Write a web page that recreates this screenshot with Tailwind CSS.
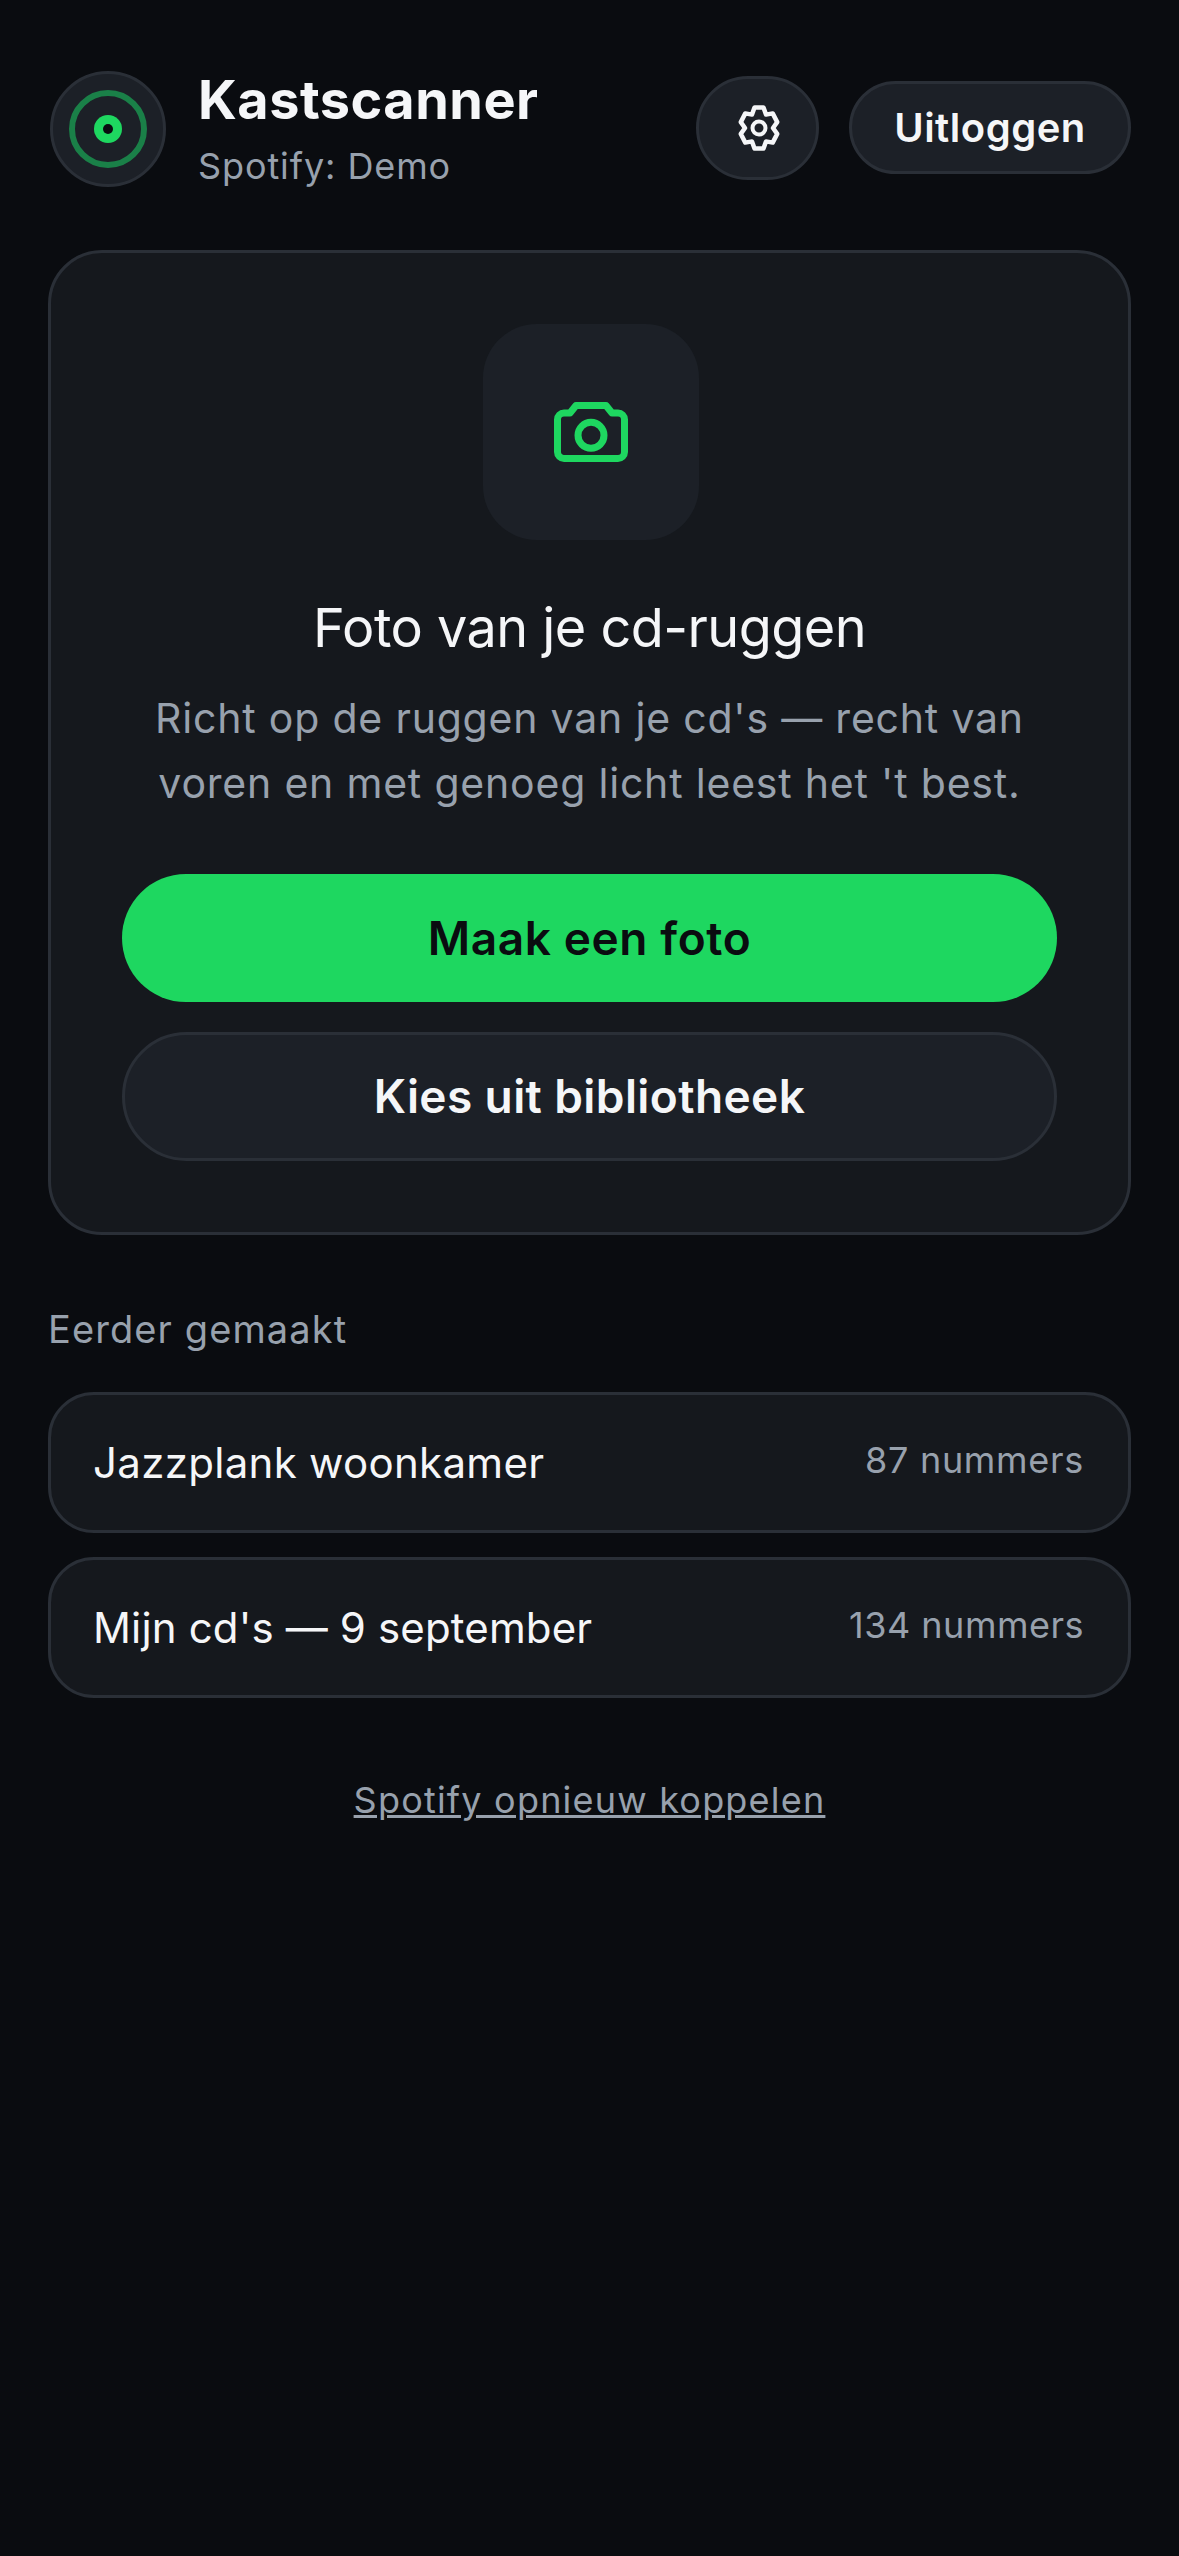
<!DOCTYPE html>
<html lang="nl">
<head>
    <meta charset="UTF-8">
    <meta name="viewport" content="width=device-width, initial-scale=1.0">
    <title>Kastscanner</title>
    <script src="https://cdn.jsdelivr.net/npm/@tailwindcss/browser@4"></script>
</head>
<body class="bg-[#0a0c10] font-[Inter,sans-serif] text-[#f5f6f8]">
    <main class="h-[2556px] px-[48px] pt-[71px]">
        <!-- Kop -->
        <header class="flex h-[116px] items-center">
            <div class="ml-[2px] flex h-[116px] w-[116px] items-center justify-center rounded-full border-[3px] border-[#2a2f37] bg-[#1c2027]">
                <div class="flex h-[78px] w-[78px] items-center justify-center rounded-full border-[6px] border-[#1a8048]">
                    <div class="flex h-[28px] w-[28px] items-center justify-center rounded-full bg-[#1ed760]">
                        <div class="h-[10px] w-[10px] rounded-full bg-[#0a0c10]"></div>
                    </div>
                </div>
            </div>
            <div class="ml-[32px] flex flex-col">
                <h1 class="text-[54px] leading-[66px] font-bold tracking-[0.5px]">Kastscanner</h1>
                <p class="mt-[8px] text-[36px] leading-[50px] tracking-[0.9px] text-[#98a1ad]">Spotify: Demo</p>
            </div>
            <div class="mb-[3px] ml-auto flex items-center">
                <button class="flex h-[104px] w-[123px] items-center justify-center rounded-full border-[3px] border-[#2a2f37] bg-[#1c2027]">
                    <svg class="ml-[3px] h-[60px] w-[60px]" viewBox="-30 -30 60 60" fill="none" stroke="#f5f6f8" stroke-width="4.5" stroke-linejoin="round">
                        <path d="M-4.500 -20.500 L4.500 -20.500 L7 -13.400 L13.700 -14.600 L18.200 -5.900 L14 0 L18.200 5.900 L13.700 14.600 L7 13.400 L4.500 20.500 L-4.500 20.500 L-7 13.400 L-13.700 14.600 L-18.200 5.900 L-14 0 L-18.200 -5.900 L-13.700 -14.600 L-7 -13.400 Z"/>
                        <circle cx="0" cy="0" r="6.500" stroke-width="4"/>
                    </svg>
                </button>
                <button class="ml-[30px] flex h-[93px] w-[282px] items-center justify-center rounded-full border-[3px] border-[#2a2f37] bg-[#1c2027] text-[40px] font-semibold tracking-[0.5px]">Uitloggen</button>
            </div>
        </header>

        <!-- Foto maken -->
        <section class="mt-[63px] flex h-[985px] flex-col items-center rounded-[54px] border-[3px] border-[#2a2f37] bg-[#15181d] px-[71px] pt-[71px]">
            <div class="ml-[2px] flex h-[216px] w-[216px] items-center justify-center rounded-[54px] bg-[#1c2027]">
                <svg class="h-[60px] w-[74px]" viewBox="0 0 74 60" fill="none" stroke="#1ed760" stroke-width="7" stroke-linejoin="round">
                    <path d="M16 11 L22 3.5 H52 L58 11 H64 a6.5 6.5 0 0 1 6.5 6.5 V50 a6.5 6.5 0 0 1 -6.5 6.5 H10 a6.5 6.5 0 0 1 -6.5 -6.5 V17.500 a6.5 6.5 0 0 1 6.5 -6.5 Z"/>
                    <circle cx="37" cy="33.3" r="13"/>
                </svg>
            </div>
            <h2 class="mt-[54px] text-[54px] leading-[68px] tracking-[-0.55px]">Foto van je cd-ruggen</h2>
            <p class="mt-[24px] text-center text-[41px] leading-[65px] tracking-[0.8px] text-[#98a1ad]">Richt op de ruggen van je cd's — recht van<br>voren en met genoeg licht leest het 't best.</p>
            <button class="mt-[58px] h-[128px] w-full rounded-full bg-[#1ed760] text-[46px] font-semibold tracking-[0.6px] text-[#0a0c10]">Maak een foto</button>
            <button class="mt-[30px] h-[129px] w-full rounded-full border-[3px] border-[#2a2f37] bg-[#1c2027] text-[46px] font-semibold tracking-[0.4px]">Kies uit bibliotheek</button>
        </section>

        <!-- Eerder gemaakt -->
        <h3 class="mt-[70px] text-[38px] leading-[48px] tracking-[1.1px] text-[#98a1ad]">Eerder gemaakt</h3>
        <ul class="mt-[39px] flex flex-col gap-[24px]">
            <li class="flex h-[141px] items-center justify-between rounded-[46px] border-[3px] border-[#2a2f37] bg-[#15181d] pr-[44px] pl-[42px]">
                <span class="text-[42px] tracking-[0.3px]">Jazzplank woonkamer</span>
                <span class="mb-[5px] text-[36px] tracking-[0.7px] text-[#98a1ad]">87 nummers</span>
            </li>
            <li class="flex h-[141px] items-center justify-between rounded-[46px] border-[3px] border-[#2a2f37] bg-[#15181d] pr-[44px] pl-[42px]">
                <span class="text-[42px] tracking-[0.15px]">Mijn cd's — 9 september</span>
                <span class="mb-[5px] text-[36px] tracking-[0.5px] text-[#98a1ad]">134 nummers</span>
            </li>
        </ul>
        <div class="mt-[75px] text-center">
            <a href="#" class="text-[36px] tracking-[1.2px] text-[#98a1ad] underline">Spotify opnieuw koppelen</a>
        </div>
    </main>
</body>
</html>
